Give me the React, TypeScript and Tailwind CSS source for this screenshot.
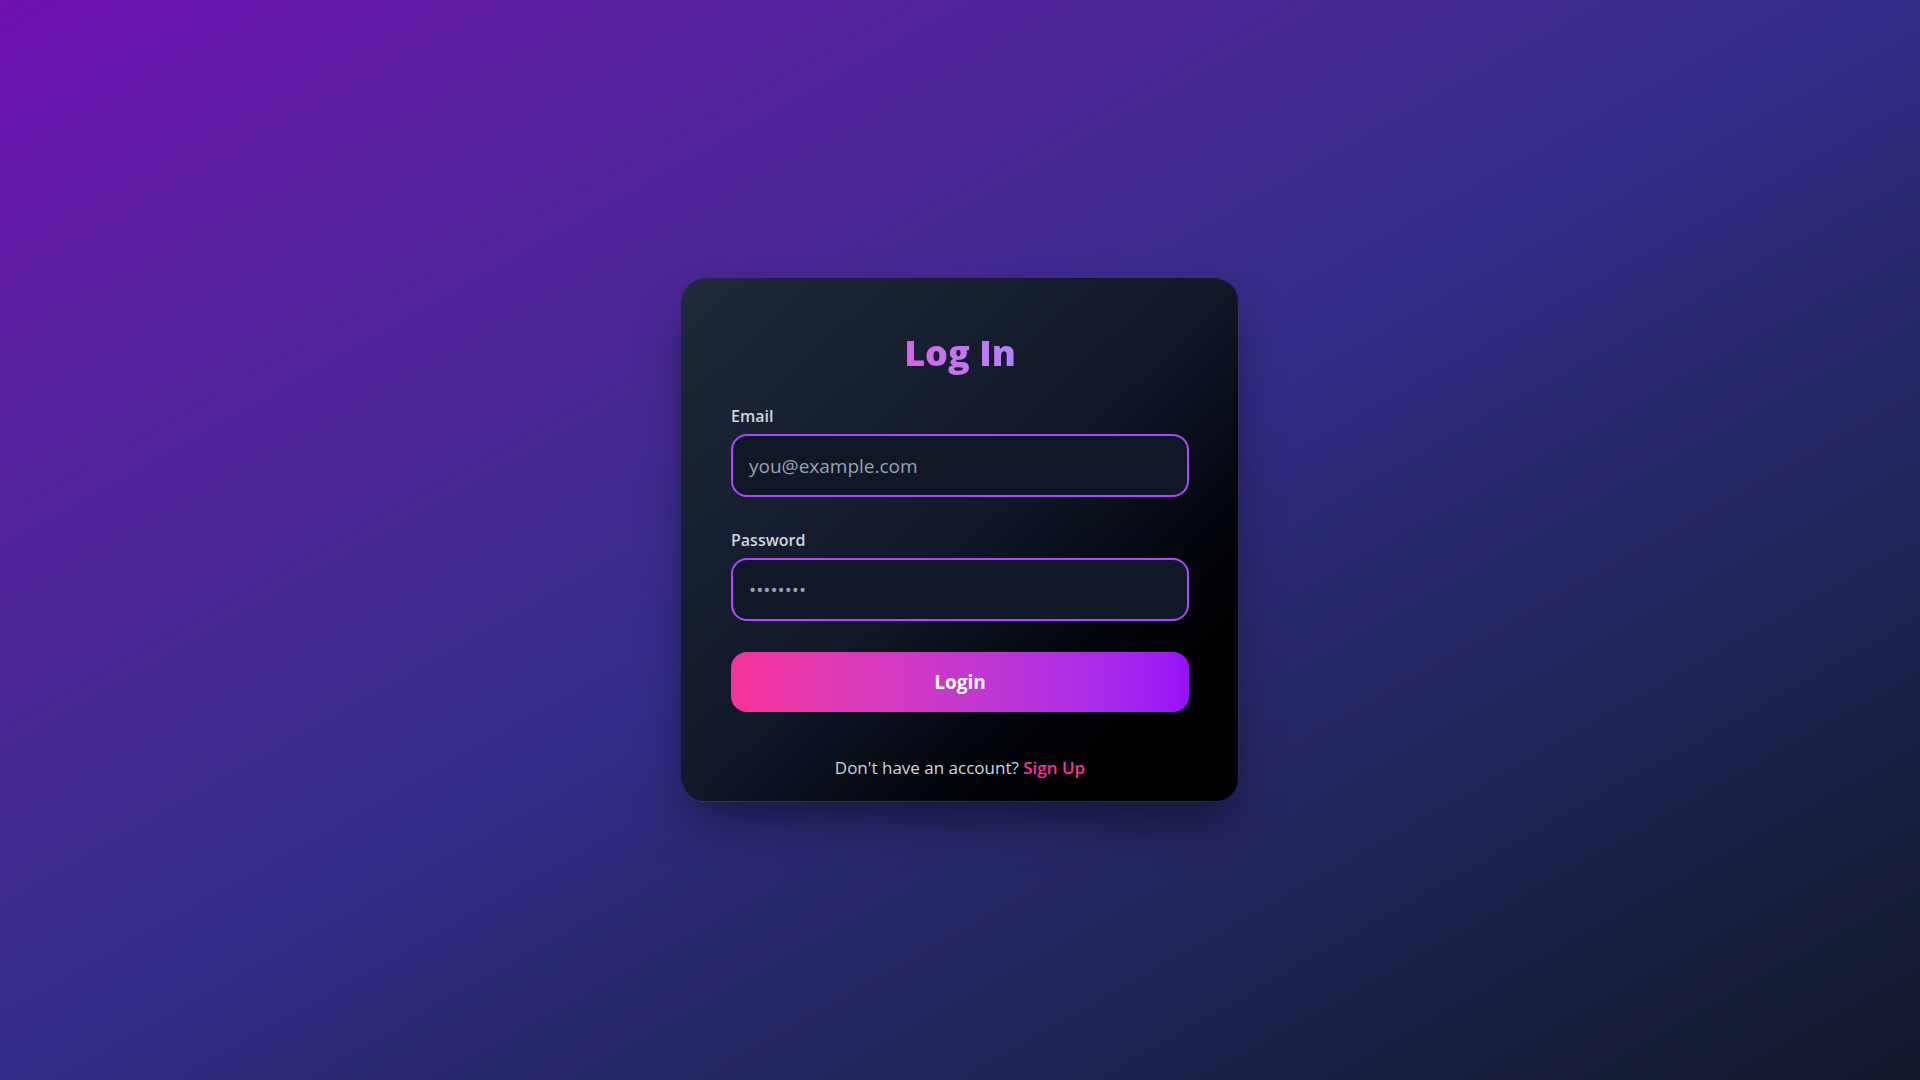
import React from "react";

export default function App() {
  return (
    <div className="min-h-screen w-full flex items-center justify-center bg-gradient-to-br from-purple-800 via-indigo-900 to-gray-900 font-['Open_Sans','Noto_Sans',sans-serif]">
      <div className="w-[558px] rounded-3xl border border-purple-500/20 bg-gradient-to-br from-gray-800 via-gray-900 to-black px-[49px] pt-[54px] pb-[21px] shadow-2xl shadow-black/50">
        <h1 className="text-center text-4xl leading-[40px] font-extrabold mb-8">
          <span className="bg-gradient-to-r from-[#d862e4] to-[#b282fc] bg-clip-text text-transparent">
            Log In
          </span>
        </h1>
        <form onSubmit={(e) => e.preventDefault()}>
          <div>
            <label className="block text-base leading-[22px] font-semibold text-gray-300 mb-[7px]">Email</label>
            <input
              type="email"
              placeholder="you@example.com"
              className="block w-full h-[63px] rounded-2xl border-2 border-purple-500 bg-gray-900 px-4 text-[19px] text-white placeholder-gray-400 outline-none"
            />
          </div>
          <div className="mt-8">
            <label className="block text-base leading-[22px] font-semibold text-gray-300 mb-[7px]">Password</label>
            <input
              type="password"
              placeholder="••••••••"
              className="block w-full h-[63px] rounded-2xl border-2 border-purple-500 bg-gray-900 px-4 text-[19px] text-white placeholder-gray-400 outline-none"
            />
          </div>
          <button
            type="submit"
            className="mt-[31px] block w-full h-[60px] rounded-2xl bg-gradient-to-r from-pink-500 to-purple-600 text-[19px] font-bold text-white"
          >
            Login
          </button>
        </form>
        <p className="mt-11 text-center text-[17px] leading-6 text-gray-300">
          Don't have an account? <span className="font-semibold text-pink-500">Sign Up</span>
        </p>
      </div>
    </div>
  );
}
